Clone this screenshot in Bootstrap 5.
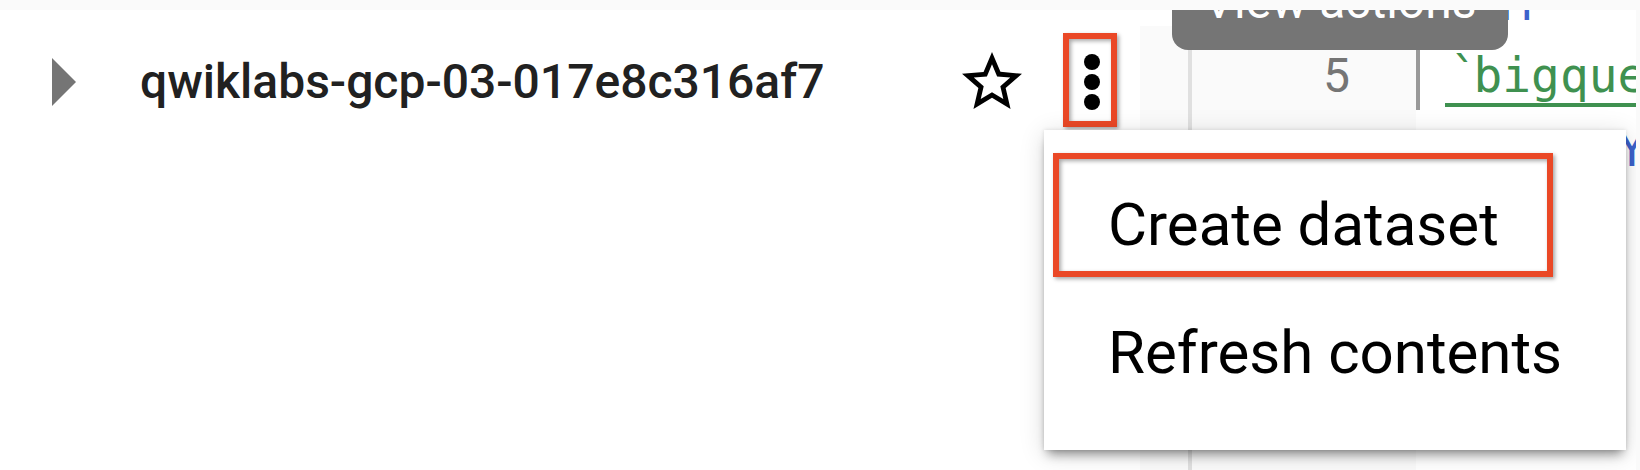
<!DOCTYPE html>
<html lang="en">
<head>
  <meta charset="UTF-8">
  <meta name="viewport" content="width=device-width, initial-scale=1">
  <title>Explorer</title>
  <link href="https://cdn.jsdelivr.net/npm/bootstrap@5.3.0/dist/css/bootstrap.min.css" rel="stylesheet">
  <style>
    body {
      height: 470px;
      padding: 10px 4px 0 0;
      background-color: #fafafa;
      font-family: Roboto, "Liberation Sans", sans-serif;
    }
    .workspace {
      height: 460px;
      background-color: #fff;
    }
    .explorer {
      width: 1140px;
    }
    .resource-row {
      height: 144px;
      padding-left: 52px;
    }
    .resource-name {
      width: 816px;
      margin-left: 64px;
      color: #212121;
      font-size: 48px;
      font-weight: 500;
      line-height: 72px;
    }
    .more-btn {
      width: 54px;
      height: 94px;
      margin: 0 0 4px 35px;
    }
    .editor {
      padding-top: 16px;
    }
    .splitter {
      width: 52px;
      background-color: #fafafa;
      border-right: 4px solid #e0e0e0;
    }
    .gutter {
      width: 224px;
      padding-right: 66px;
      background-color: #fafafa;
      color: #757575;
      font-size: 48px;
      line-height: 72px;
    }
    .lines {
      margin-top: -58px;
    }
    .code {
      font-family: "DejaVu Sans Mono", monospace;
      font-size: 47.8px;
      line-height: 72px;
      color: #3c62cb;
    }
    .code-line {
      height: 72px;
      white-space: pre;
    }
    .code-line:last-child {
      padding-top: 2px;
    }
    .guide {
      border-left: 4px solid #999;
      margin-right: -4px;
      height: 70px;
    }
    .table-ref {
      color: #3f9150;
      border-bottom: 4px solid #3f9150;
      height: 67px;
    }
    .tick {
      margin: 0 -5px 0 5px;
    }
    .hint {
      top: 0;
      left: 1172px;
      width: 336px;
      height: 40px;
      border-radius: 0 0 16px 16px;
      background-color: #757575;
      color: #fff;
      font-size: 48px;
      line-height: 48px;
    }
    .hint span {
      margin-top: -32px;
    }
    .actions-menu {
      top: 120px;
      left: 1044px;
      width: 582px;
      height: 320px;
      padding: 31px 0;
      background-color: #fff;
      box-shadow: 0 8px 10px -4px rgba(0, 0, 0, .4), 0 4px 24px rgba(0, 0, 0, .14), 0 0 4px rgba(0, 0, 0, .12);
    }
    .actions-menu .menu-entry {
      height: 128px;
      padding-left: 64px;
      color: #000;
      font-size: 60px;
      line-height: 128px;
    }
    .callout {
      border: 6px solid #ea4826;
      box-shadow: 2px 2px 4px rgba(0, 0, 0, .35), inset 2px 2px 4px rgba(0, 0, 0, .35);
    }
    .callout-entry {
      top: 23px;
      left: 9px;
      width: 500px;
      height: 124px;
    }
  </style>
</head>
<body class="overflow-hidden">

<main class="workspace position-relative d-flex overflow-hidden">

  <!-- Explorer panel -->
  <section class="explorer flex-shrink-0">
    <div class="resource-row d-flex align-items-center">
      <svg width="24" height="48" viewBox="0 0 24 48"><path d="M0 0 24 24 0 48Z" fill="#757575"/></svg>
      <span class="resource-name text-nowrap">qwiklabs-gcp-03-017e8c316af7</span>
      <svg class="flex-shrink-0" width="72" height="72" viewBox="0 0 24 24">
        <path d="M22 9.24l-7.19-.62L12 2 9.19 8.63 2 9.24l5.46 4.73L5.82 21 12 17.27 18.18 21l-1.63-7.03L22 9.24zM12 15.4l-3.76 2.27 1-4.28-3.32-2.88 4.38-.38L12 6.1l1.71 4.04 4.38.38-3.32 2.88 1 4.28L12 15.4z"/>
      </svg>
      <div class="more-btn callout d-flex align-items-center justify-content-center flex-shrink-0">
        <svg width="20" height="60" viewBox="0 0 20 60">
          <circle cx="12" cy="12" r="8"/>
          <circle cx="12" cy="32" r="8"/>
          <circle cx="12" cy="52" r="8"/>
        </svg>
      </div>
    </div>
  </section>

  <!-- Query editor -->
  <section class="editor d-flex flex-grow-1 overflow-hidden">
    <div class="splitter flex-shrink-0"></div>
    <div class="gutter text-end flex-shrink-0">
      <div class="lines">
        <div>4</div>
        <div>5</div>
        <div>6</div>
      </div>
    </div>
    <div class="code">
      <div class="lines">
        <div class="code-line">FROM</div>
        <div class="code-line d-flex"><div class="guide"></div><span> </span><span class="table-ref"><span class="tick">`</span>bigquery</span></div>
        <div class="code-line">GROUP BY</div>
      </div>
    </div>
  </section>

  <!-- Tooltip of the actions button -->
  <div class="hint position-absolute d-flex justify-content-center overflow-hidden">
    <span class="text-nowrap">View actions</span>
  </div>

  <!-- Actions menu -->
  <div class="actions-menu position-absolute">
    <div class="menu-entry text-nowrap">Create dataset</div>
    <div class="menu-entry text-nowrap">Refresh contents</div>
    <div class="callout callout-entry position-absolute"></div>
  </div>

</main>

<script src="https://cdn.jsdelivr.net/npm/bootstrap@5.3.0/dist/js/bootstrap.bundle.min.js"></script>
</body>
</html>
